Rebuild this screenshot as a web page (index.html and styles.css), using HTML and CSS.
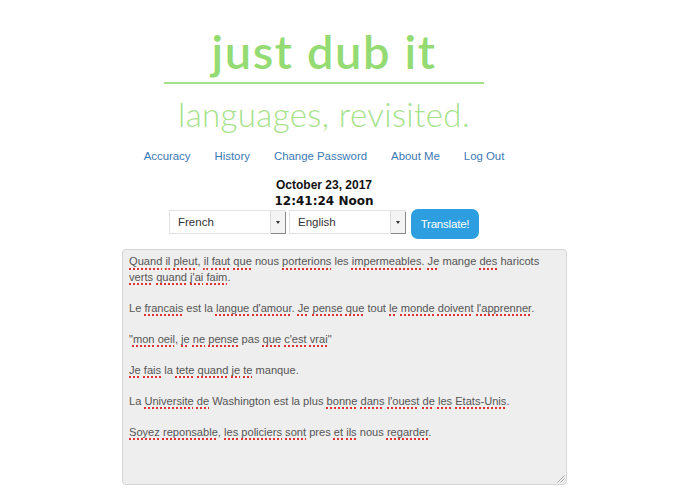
FILE: index.html
```html
<!DOCTYPE html>
<html>
<head>
<meta charset="utf-8">
<link rel="stylesheet" href="styles.css">
</head>
<body>
<div class="page">
  <header class="logo">
    <div class="logo-title">just dub it</div>
    <div class="logo-rule"></div>
    <div class="logo-tag">languages, revisited.</div>
  </header>
  <nav class="nav">
    <a href="#">Accuracy</a>
    <a href="#">History</a>
    <a href="#">Change Password</a>
    <a href="#">About Me</a>
    <a href="#">Log Out</a>
  </nav>
  <div class="date">October 23, 2017</div>
  <div class="time">12:41:24 Noon</div>
  <div class="controls">
    <div class="select"><span class="select-text">French</span><span class="select-arrow"></span></div>
    <div class="select"><span class="select-text">English</span><span class="select-arrow"></span></div>
    <button class="btn">Translate!</button>
  </div>
  <div class="textarea">
    <p><span class="sp">Quand</span> <span class="sp">il</span> <span class="sp">pleut</span>, <span class="sp">il</span> <span class="sp">faut</span> <span class="sp">que</span> nous <span class="sp">porterions</span> les <span class="sp">impermeables</span>. <span class="sp">Je</span> mange <span class="sp">des</span> haricots<br><span class="sp">verts</span> <span class="sp">quand</span> <span class="sp">j'ai</span> <span class="sp">faim</span>.</p>
    <p>Le <span class="sp">francais</span> est la <span class="sp">langue</span> <span class="sp">d'amour</span>. <span class="sp">Je</span> <span class="sp">pense</span> <span class="sp">que</span> tout <span class="sp">le</span> <span class="sp">monde</span> <span class="sp">doivent</span> <span class="sp">l'apprenner</span>.</p>
    <p>"<span class="sp">mon</span> <span class="sp">oeil</span>, <span class="sp">je</span> <span class="sp">ne</span> <span class="sp">pense</span> pas <span class="sp">que</span> <span class="sp">c'est</span> <span class="sp">vrai</span>"</p>
    <p><span class="sp">Je</span> <span class="sp">fais</span> la <span class="sp">tete</span> <span class="sp">quand</span> <span class="sp">je</span> <span class="sp">te</span> manque.</p>
    <p>La <span class="sp">Universite</span> <span class="sp">de</span> Washington est la plus <span class="sp">bonne</span> <span class="sp">dans</span> <span class="sp">l'ouest</span> <span class="sp">de</span> <span class="sp">les</span> <span class="sp">Etats-Unis</span>.</p>
    <p><span class="sp">Soyez</span> <span class="sp">reponsable</span>, <span class="sp">les</span> <span class="sp">policiers</span> <span class="sp">sont</span> pres <span class="sp">et</span> <span class="sp">ils</span> nous <span class="sp">regarder</span>.</p>
    <svg class="grip" width="10" height="10" viewBox="0 0 10 10"><path d="M9.5 2.5 L2.5 9.5 M9.5 5.5 L5.5 9.5" stroke="#aaa" stroke-width="1" fill="none"/></svg>
  </div>
</div>
</body>
</html>
```

FILE: styles.css
```css
html, body {
  margin: 0;
  padding: 0;
  background: #fff;
}
body {
  font-family: "Liberation Sans", Arial, sans-serif;
  font-size: 12px;
  color: #333;
}
.page {
  width: 648px;
  display: flex;
  flex-direction: column;
  align-items: center;
}
.logo {
  display: flex;
  flex-direction: column;
  align-items: center;
  padding-top: 23px;
}
.logo-title {
  font-family: Lato, sans-serif;
  font-weight: 600;
  font-size: 47px;
  line-height: 56px;
  color: #93db72;
  letter-spacing: 1.6px;
}
.logo-rule {
  width: 320px;
  height: 2px;
  background: #a4e28a;
  margin-top: 3px;
}
.logo-tag {
  font-family: Lato, sans-serif;
  font-weight: 300;
  font-size: 33px;
  line-height: 40px;
  color: #a5e28b;
  letter-spacing: 0.4px;
  margin-top: 10px;
}
.nav {
  display: flex;
  gap: 24px;
  margin-top: 14px;
  line-height: 16px;
}
.nav a {
  color: #3a78b5;
  text-decoration: none;
  font-size: 11.4px;
}
.date {
  margin-top: 13px;
  font-weight: bold;
  font-size: 12px;
  line-height: 16px;
  color: #111;
}
.time {
  font-family: "DejaVu Sans", Verdana, sans-serif;
  font-weight: bold;
  font-size: 12px;
  line-height: 16px;
  color: #111;
}
.controls {
  display: flex;
  align-items: flex-start;
  gap: 3px;
  margin-top: 0;
}
.select {
  margin-top: 1px;
  width: 117px;
  height: 24px;
  box-sizing: border-box;
  border: 1px solid #e2e2e2;
  background: #fff;
  display: flex;
  align-items: center;
  justify-content: space-between;
}
.select-text {
  padding-left: 8px;
  font-size: 11.5px;
  color: #333;
}
.select-arrow {
  width: 14px;
  height: 22px;
  background: #f4f4f4;
  border-left: 1px solid #ddd;
  box-shadow: 1px 1px 0 #888;
  position: relative;
}
.select-arrow::after {
  content: "";
  position: absolute;
  left: 5px;
  top: 10px;
  border-left: 2px solid transparent;
  border-right: 2px solid transparent;
  border-top: 3px solid #333;
}
.btn {
  margin-left: 2px;
  width: 68px;
  height: 30px;
  border: none;
  border-radius: 7px;
  background: #2d9fe0;
  color: #fff;
  font-family: "Liberation Sans", Arial, sans-serif;
  font-size: 11.5px;
  padding: 0;
  letter-spacing: -0.2px;
}
.textarea {
  align-self: flex-start;
  margin-left: 122px;
  margin-top: 10px;
  width: 445px;
  height: 236px;
  box-sizing: border-box;
  background: #eeeeee;
  border: 1px solid #d6d6d6;
  border-radius: 4px;
  padding: 4px 6px;
  color: #555;
  font-size: 11.1px;
  line-height: 15.5px;
  position: relative;
}
.textarea p {
  margin: 0 0 15.5px 0;
}
.sp {
  text-decoration: underline dotted #e03030;
  text-underline-offset: 3px;
  text-decoration-thickness: 1.5px;
}
.grip {
  position: absolute;
  right: 1px;
  bottom: 1px;
}
```
